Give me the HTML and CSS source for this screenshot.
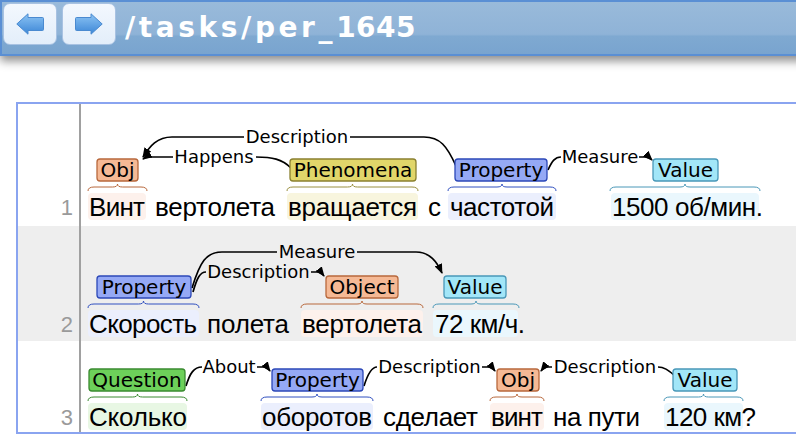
FILE: index.html
```html
<!DOCTYPE html>
<html>
<head>
<meta charset="utf-8">
<link rel="stylesheet" href="styles.css">
</head>
<body>
<header class="topbar">
  <button class="navbtn" aria-label="back">
    <svg width="28" height="22" viewBox="0 0 28 22"><defs><linearGradient id="ag" x1="0" y1="0" x2="0" y2="1"><stop offset="0" stop-color="#8cc4f4"/><stop offset="1" stop-color="#3c86d6"/></linearGradient></defs><path d="M0.8,11 L12,0.8 L12,4.5 L26.5,4.5 Q27.5,4.5 27.5,5.5 L27.5,16.5 Q27.5,17.5 26.5,17.5 L12,17.5 L12,21.2 Z" fill="url(#ag)" stroke="#4a8ad0" stroke-width="1" stroke-linejoin="round"/></svg>
  </button>
  <button class="navbtn" aria-label="forward">
    <svg width="28" height="22" viewBox="0 0 28 22"><defs><linearGradient id="ag2" x1="0" y1="0" x2="0" y2="1"><stop offset="0" stop-color="#8cc4f4"/><stop offset="1" stop-color="#3c86d6"/></linearGradient></defs><path d="M27.2,11 L16,0.8 L16,4.5 L1.5,4.5 Q0.5,4.5 0.5,5.5 L0.5,16.5 Q0.5,17.5 1.5,17.5 L16,17.5 L16,21.2 Z" fill="url(#ag2)" stroke="#4a8ad0" stroke-width="1" stroke-linejoin="round"/></svg>
  </button>
  <h1 class="title"><span class="path">/tasks/per_</span>1645</h1>
</header>

<svg class="defs" width="0" height="0">
  <defs>
    <marker id="arr" markerUnits="userSpaceOnUse" markerWidth="10" markerHeight="8" refX="9" refY="4" orient="auto">
      <path d="M0,0 L10,4 L0,8 Z" fill="#000"/>
    </marker>
  </defs>
</svg>

<main class="doc">
  <section class="row row-1">
    <div class="num">1</div>
    <svg class="sent" width="720" height="122" viewBox="81 104 720 122">
      <g class="hl">
        <rect x="88" y="193" width="58" height="27" rx="4" fill="#fdf1ec"/>
        <rect x="287" y="193" width="131" height="27" rx="4" fill="#f8f5de"/>
        <rect x="448" y="193" width="108" height="27" rx="4" fill="#ebeffd"/>
        <rect x="611" y="193" width="148" height="27" rx="4" fill="#eaf7fd"/>
      </g>
      <g class="brace">
        <path stroke="#b8683c" d="M88,191 Q88,187 94,187 L112.5,187 Q117.5,187 117.5,184 Q117.5,187 122.5,187 L141,187 Q147,187 147,191"/>
        <path stroke="#9a9040" d="M287,191 Q287,187 293,187 L347.5,187 Q352.5,187 352.5,184 Q352.5,187 357.5,187 L412,187 Q418,187 418,191"/>
        <path stroke="#3050c0" d="M448,191 Q448,187 454,187 L497,187 Q502,187 502,184 Q502,187 507,187 L550,187 Q556,187 556,191"/>
        <path stroke="#4a98b8" d="M610,191 Q610,187 616,187 L680,187 Q685,187 685,184 Q685,187 690,187 L754,187 Q760,187 760,191"/>
      </g>
      <g class="arcs">
        <path d="M456,166 C447,146 440,137 424,137 L350,137"/>
        <path d="M244,137 L172,137 C157,137 150,146 143,157" marker-end="url(#arr)"/>
        <path d="M291,168 C282,159 272,157 256,157"/>
        <path d="M173,157 L150,157 Q146,157 143,159" marker-end="url(#arr)"/>
        <path d="M548,170 C552,161 555,157 561,157"/>
        <path d="M639,157 L645,157 Q649,157 652,160" marker-end="url(#arr)"/>
      </g>
      <g class="alabel">
        <text x="297" y="143">Description</text>
        <text x="214" y="163">Happens</text>
        <text x="600" y="163">Measure</text>
      </g>
      <g class="box">
        <rect x="97" y="159" width="41" height="22" rx="3" fill="#f5b995" stroke="#b8683c"/>
        <rect x="290" y="159" width="126" height="22" rx="3" fill="#e1d66a" stroke="#8a8030"/>
        <rect x="455" y="159" width="92" height="22" rx="3" fill="#95a9f5" stroke="#2c48b8"/>
        <rect x="653" y="159" width="65" height="22" rx="3" fill="#a2e6f8" stroke="#4a98b8"/>
      </g>
      <g class="blabel">
        <text x="117.5" y="177">Obj</text>
        <text x="353" y="177">Phenomena</text>
        <text x="501" y="177">Property</text>
        <text x="685.5" y="177">Value</text>
      </g>
      <g class="words">
        <text x="89" y="216" textLength="56">Винт</text>
        <text x="155" y="216" textLength="120">вертолета</text>
        <text x="288" y="216" textLength="129">вращается</text>
        <text x="428" y="216">с</text>
        <text x="450" y="216" textLength="104">частотой</text>
        <text x="612" y="216" textLength="151">1500 об/мин.</text>
      </g>
    </svg>
  </section>

  <section class="row row-2">
    <div class="num">2</div>
    <svg class="sent" width="720" height="115" viewBox="81 226 720 115">
      <g class="hl">
        <rect x="88" y="310" width="111" height="27" rx="4" fill="#ebeffd"/>
        <rect x="301" y="310" width="122" height="27" rx="4" fill="#fdf1ec"/>
        <rect x="433" y="310" width="85" height="27" rx="4" fill="#eaf7fd"/>
      </g>
      <g class="brace">
        <path stroke="#3050c0" d="M88,308 Q88,304 94,304 L138.5,304 Q143.5,304 143.5,301 Q143.5,304 148.5,304 L193,304 Q199,304 199,308"/>
        <path stroke="#b8683c" d="M301,308 Q301,304 307,304 L357,304 Q362,304 362,301 Q362,304 367,304 L417,304 Q423,304 423,308"/>
        <path stroke="#4a98b8" d="M433,308 Q433,304 439,304 L471,304 Q476,304 476,301 Q476,304 481,304 L513,304 Q519,304 519,308"/>
      </g>
      <g class="arcs">
        <path d="M192,288 C200,262 206,252 222,252 L277,252"/>
        <path d="M357,252 L416,252 C430,252 437,262 442,273" marker-end="url(#arr)"/>
        <path d="M193,292 C197,278 200,272 206,272"/>
        <path d="M311,272 L317,272 Q321,272 324,276" marker-end="url(#arr)"/>
      </g>
      <g class="alabel">
        <text x="317" y="258">Measure</text>
        <text x="258.5" y="278">Description</text>
      </g>
      <g class="box">
        <rect x="97" y="276" width="94" height="22" rx="3" fill="#95a9f5" stroke="#2c48b8"/>
        <rect x="326" y="276" width="72" height="22" rx="3" fill="#f5b995" stroke="#b8683c"/>
        <rect x="444" y="276" width="62" height="22" rx="3" fill="#a2e6f8" stroke="#4a98b8"/>
      </g>
      <g class="blabel">
        <text x="144" y="294">Property</text>
        <text x="362" y="294">Object</text>
        <text x="475" y="294">Value</text>
      </g>
      <g class="words">
        <text x="89" y="333" textLength="108">Скорость</text>
        <text x="207" y="333" textLength="82">полета</text>
        <text x="302" y="333" textLength="120">вертолета</text>
        <text x="435" y="333" textLength="90">72 км/ч.</text>
      </g>
    </svg>
  </section>

  <section class="row row-3">
    <div class="num">3</div>
    <svg class="sent" width="720" height="91" viewBox="81 341 720 91">
      <g class="hl">
        <rect x="88" y="403" width="99" height="27" rx="4" fill="#e8f7e4"/>
        <rect x="261" y="403" width="112" height="27" rx="4" fill="#ebeffd"/>
        <rect x="490" y="403" width="54" height="27" rx="4" fill="#fdf1ec"/>
        <rect x="664" y="403" width="79" height="27" rx="4" fill="#eaf7fd"/>
      </g>
      <g class="brace">
        <path stroke="#3a8a30" d="M88,401 Q88,397 94,397 L132.5,397 Q137.5,397 137.5,394 Q137.5,397 142.5,397 L181,397 Q187,397 187,401"/>
        <path stroke="#3050c0" d="M261,401 Q261,397 267,397 L312,397 Q317,397 317,394 Q317,397 322,397 L367,397 Q373,397 373,401"/>
        <path stroke="#b8683c" d="M490,401 Q490,397 496,397 L512,397 Q517,397 517,394 Q517,397 522,397 L538,397 Q544,397 544,401"/>
        <path stroke="#4a98b8" d="M664,401 Q664,397 670,397 L698.5,397 Q703.5,397 703.5,394 Q703.5,397 708.5,397 L737,397 Q743,397 743,401"/>
      </g>
      <g class="arcs">
        <path d="M186,386 C190,373 194,367 202,367"/>
        <path d="M257,367 L263,367 Q267,367 270,371" marker-end="url(#arr)"/>
        <path d="M364,386 C368,373 372,367 377,367"/>
        <path d="M482,367 L488,367 Q492,367 495,371" marker-end="url(#arr)"/>
        <path d="M674,375 C668,370 664,367 658,367"/>
        <path d="M552,367 L548,367 Q544,367 541,371" marker-end="url(#arr)"/>
      </g>
      <g class="alabel">
        <text x="229" y="373">About</text>
        <text x="429.5" y="373">Description</text>
        <text x="605" y="373">Description</text>
      </g>
      <g class="box">
        <rect x="89" y="369" width="96" height="22" rx="3" fill="#6dd05a" stroke="#3a8a30"/>
        <rect x="272" y="369" width="91" height="22" rx="3" fill="#95a9f5" stroke="#2c48b8"/>
        <rect x="497" y="369" width="42" height="22" rx="3" fill="#f5b995" stroke="#b8683c"/>
        <rect x="673" y="369" width="64" height="22" rx="3" fill="#a2e6f8" stroke="#4a98b8"/>
      </g>
      <g class="blabel">
        <text x="137" y="387">Question</text>
        <text x="317.5" y="387">Property</text>
        <text x="518" y="387">Obj</text>
        <text x="705" y="387">Value</text>
      </g>
      <g class="words">
        <text x="89" y="426" textLength="98">Сколько</text>
        <text x="262" y="426" textLength="110">оборотов</text>
        <text x="383" y="426" textLength="95">сделает</text>
        <text x="491" y="426" textLength="52">винт</text>
        <text x="553" y="426" textLength="87">на пути</text>
        <text x="665" y="426" textLength="91">120 км?</text>
      </g>
    </svg>
  </section>
</main>
</body>
</html>
```

FILE: styles.css
```css
html, body {
  margin: 0;
  padding: 0;
  background: #ffffff;
  overflow: hidden;
  width: 796px;
  height: 438px;
}

.topbar {
  display: flex;
  align-items: flex-start;
  gap: 5px;
  box-sizing: border-box;
  width: 820px;
  height: 56px;
  padding: 1px;
  border: 2px solid #5a8fd4;
  background: linear-gradient(#99bada 0%, #8fb3d7 62%, #7fa9d1 66%, #79a4cf 100%);
  box-shadow: 0 5px 9px rgba(0, 0, 0, 0.45);
  position: relative;
  z-index: 1;
}

.navbtn {
  display: flex;
  align-items: center;
  justify-content: center;
  width: 54px;
  height: 42px;
  margin: 0;
  padding: 0;
  box-sizing: border-box;
  border: 1px solid #a8c2e2;
  border-radius: 7px;
  background: linear-gradient(#f3f8fe, #e3eefa);
}

.title {
  margin: 9px 0 0 4px;
  font-family: "DejaVu Sans", sans-serif;
  font-weight: bold;
  font-size: 28px;
  line-height: 32px;
  color: #ffffff;
  letter-spacing: 0.5px;
}

.title .path {
  letter-spacing: 3.6px;
}

.defs {
  position: absolute;
  width: 0;
  height: 0;
}

.doc {
  margin: 46px 0 0 16px;
  width: 820px;
  border: 2px solid #8aa4f0;
  display: flex;
  flex-direction: column;
}

.row {
  display: flex;
}

.row-2 {
  background: #eeeeee;
}

.num {
  width: 63px;
  flex: none;
  border-right: 2px solid #a0a0a0;
  display: flex;
  align-items: flex-end;
  justify-content: flex-end;
  box-sizing: border-box;
  padding-right: 6px;
  font-family: "Liberation Sans", Arial, sans-serif;
  font-size: 22px;
  line-height: 22px;
  color: #9a9a9a;
}

.row-1 .num { padding-bottom: 7px; }
.row-2 .num { padding-bottom: 5px; }
.row-3 .num { padding-bottom: 3px; }

.sent {
  display: block;
  flex: none;
}

.brace path {
  fill: none;
  stroke-width: 1;
}

.arcs path {
  fill: none;
  stroke: #000000;
  stroke-width: 1.7;
}

.alabel text {
  font-family: "DejaVu Sans", sans-serif;
  font-size: 18px;
  text-anchor: middle;
  fill: #000000;
}

.box rect {
  stroke-width: 1.3;
}

.blabel text {
  font-family: "DejaVu Sans", sans-serif;
  font-size: 20px;
  text-anchor: middle;
  fill: #000000;
}

.words text {
  font-family: "Liberation Sans", Arial, sans-serif;
  font-size: 26px;
  fill: #000000;
}
```
